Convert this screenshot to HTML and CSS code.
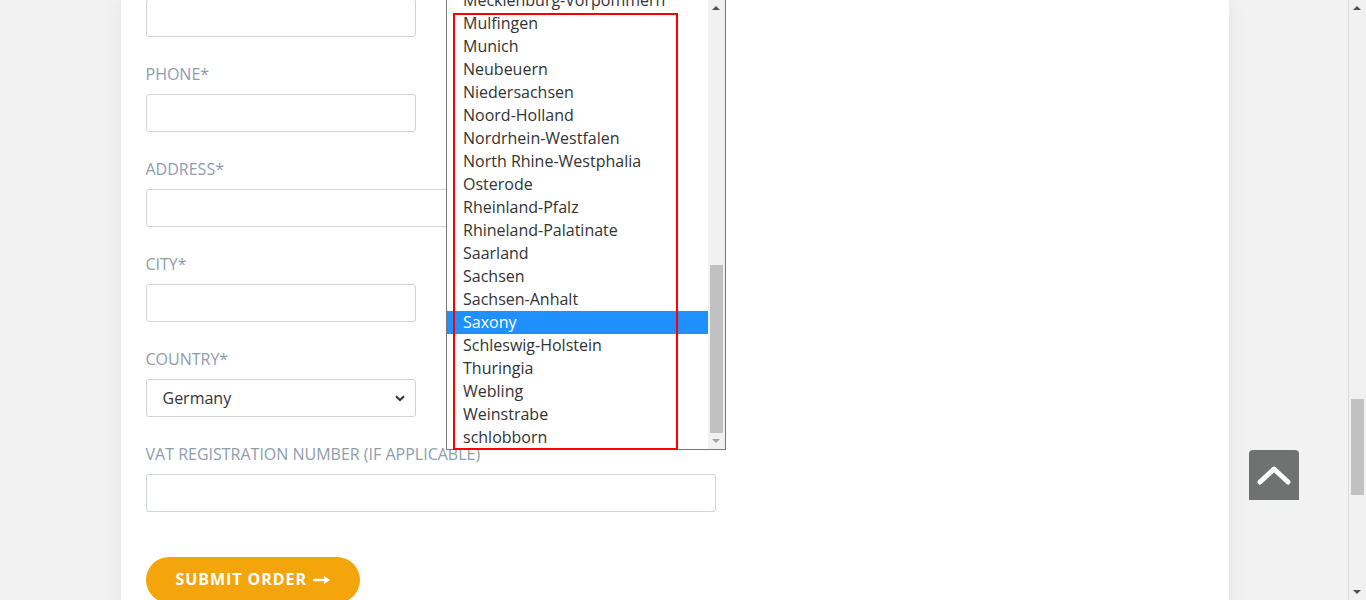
FILE: index.html
```html
<!DOCTYPE html>
<html lang="en">
<head>
<meta charset="utf-8">
<title>Checkout</title>
<link rel="stylesheet" href="styles.css">
</head>
<body>
<div class="page">
  <main class="card">
    <form class="form">
      <input class="field field-top" type="text">

      <label class="label">Phone*</label>
      <input class="field" type="text">

      <label class="label">Address*</label>
      <input class="field field-wide" type="text">

      <label class="label">City*</label>
      <input class="field" type="text">

      <label class="label">Country*</label>
      <div class="select">
        <span>Germany</span>
        <svg class="chev" width="10" height="7" viewBox="0 0 10 7"><path d="M1 1.2 L5 5 L9 1.2" fill="none" stroke="#333" stroke-width="2"/></svg>
      </div>

      <label class="label">VAT Registration Number (if applicable)</label>
      <input class="field field-wide" type="text">

      <button type="button" class="submit">Submit Order
        <svg class="arrow" width="17" height="10" viewBox="0 0 17 10"><path d="M0 5 H12" stroke="#fff" stroke-width="2.4"/><path d="M11 1 L17 5 L11 9 Z" fill="#fff"/></svg>
      </button>
    </form>
  </main>
</div>

<div class="dropdown">
  <ul class="options">
    <li>Mecklenburg-Vorpommern</li>
    <li>Mulfingen</li>
    <li>Munich</li>
    <li>Neubeuern</li>
    <li>Niedersachsen</li>
    <li>Noord-Holland</li>
    <li>Nordrhein-Westfalen</li>
    <li>North Rhine-Westphalia</li>
    <li>Osterode</li>
    <li>Rheinland-Pfalz</li>
    <li>Rhineland-Palatinate</li>
    <li>Saarland</li>
    <li>Sachsen</li>
    <li>Sachsen-Anhalt</li>
    <li class="selected">Saxony</li>
    <li>Schleswig-Holstein</li>
    <li>Thuringia</li>
    <li>Webling</li>
    <li>Weinstrabe</li>
    <li>schlobborn</li>
  </ul>
  <div class="dd-scroll">
    <span class="tri up"></span>
    <div class="dd-thumb"></div>
    <span class="tri down"></span>
  </div>
</div>

<div class="highlight-box"></div>

<div class="to-top">
  <svg width="36" height="22" viewBox="0 0 36 22"><path d="M4 18 L18 5 L32 18" fill="none" stroke="#fff" stroke-width="5" stroke-linecap="round" stroke-linejoin="round"/></svg>
</div>

<div class="page-scroll">
  <span class="tri up dark"></span>
  <div class="page-thumb"></div>
  <span class="tri down dark"></span>
</div>
</body>
</html>
```

FILE: styles.css
```css
* { box-sizing: border-box; }

html, body {
  margin: 0;
  padding: 0;
  height: 600px;
  overflow: hidden;
  background: #f2f2f2;
  font-family: "Open Sans", "Liberation Sans", sans-serif;
}

.page {
  width: 1349px;
  display: flex;
  justify-content: center;
}

.card {
  width: 1108px;
  min-height: 700px;
  background: #fff;
  box-shadow: 0 0 18px rgba(0, 0, 0, 0.07);
  padding: 0 25px;
}

.form {
  display: flex;
  flex-direction: column;
  align-items: flex-start;
}

.field {
  display: block;
  width: 270px;
  height: 38px;
  border: 1px solid #ced4da;
  border-radius: 3px;
  background: #fff;
  font: inherit;
}

.field-top { margin-top: -1px; }

.field-wide { width: 570px; }

.label {
  display: block;
  margin-top: 25px;
  margin-bottom: 8px;
  font-size: 16px;
  line-height: 24px;
  color: #8e9dab;
  text-transform: uppercase;
}

.select {
  width: 270px;
  height: 38px;
  border: 1px solid #ced4da;
  border-radius: 3px;
  display: flex;
  align-items: center;
  justify-content: space-between;
  padding: 0 10px 0 16px;
  font-size: 16px;
  color: #333;
}

.chev { display: block; }

.submit {
  margin-top: 45px;
  height: 46px;
  padding: 0 30px 2px 30px;
  border: none;
  border-radius: 23px;
  background: #f4a50b;
  color: #fff;
  font-family: "Open Sans", "Liberation Sans", sans-serif;
  font-weight: 700;
  font-size: 16px;
  letter-spacing: 0.95px;
  text-transform: uppercase;
  display: flex;
  align-items: center;
  gap: 6px;
}

.arrow { display: block; margin-top: 1px; }

/* open select popup (overlay) */
.dropdown {
  position: absolute;
  left: 446px;
  top: -12px;
  width: 280px;
  height: 462px;
  border: 1px solid #767676;
  background: #fff;
  display: flex;
}

.options {
  list-style: none;
  margin: 0;
  padding: 0;
  flex: 1;
}

.options li {
  height: 23px;
  line-height: 23px;
  padding-left: 16px;
  font-size: 16px;
  color: #333;
  white-space: nowrap;
}

.options li.selected {
  background: #1e90ff;
  color: #fff;
}

.dd-scroll {
  width: 17px;
  background: #f1f1f1;
  position: relative;
}

.dd-thumb {
  position: absolute;
  left: 2px;
  right: 2px;
  top: 276px;
  height: 168px;
  background: #c1c1c1;
}

.tri {
  position: absolute;
  left: 4px;
  width: 0;
  height: 0;
  border-left: 4px solid transparent;
  border-right: 4px solid transparent;
}

.tri.up {
  top: 17px;
  border-bottom: 4px solid #a3a3a3;
}

.tri.down {
  bottom: 6px;
  border-top: 4px solid #a3a3a3;
}

.dd-scroll .tri.up { border-bottom-color: #505050; }

/* red annotation rectangle */
.highlight-box {
  position: absolute;
  left: 453px;
  top: 13px;
  width: 225px;
  height: 437px;
  border: 2px solid #f00;
}

.to-top {
  position: absolute;
  left: 1249px;
  top: 450px;
  width: 50px;
  height: 50px;
  background: #707271;
  border-radius: 4px 4px 0 0;
  display: flex;
  align-items: center;
  justify-content: center;
}

.page-scroll {
  position: absolute;
  left: 1348px;
  top: 0;
  width: 18px;
  height: 600px;
  background: #f1f1f1;
  border-left: 1px solid #dcdcdc;
}

.page-thumb {
  position: absolute;
  left: 2px;
  width: 13px;
  top: 399px;
  height: 96px;
  background: #c1c1c1;
}

.page-scroll .tri { left: 4px; }
.page-scroll .tri.up { top: 6px; border-bottom-color: #505050; }
.page-scroll .tri.down { bottom: 6px; border-top-color: #505050; }
```
